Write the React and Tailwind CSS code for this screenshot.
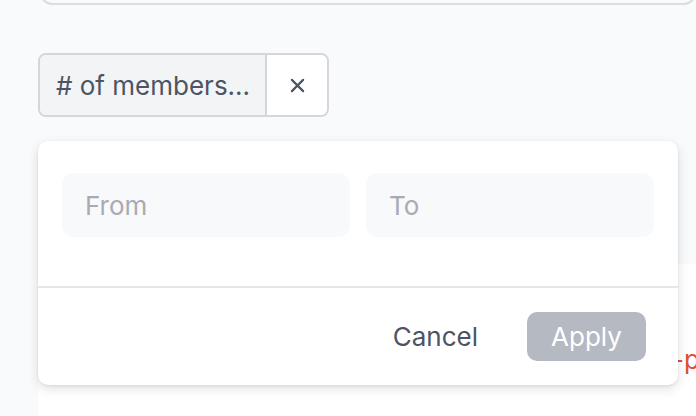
import React from "react";

export default function App() {
  return (
    <div
      className="relative w-[696px] h-[416px] overflow-hidden bg-[#f9fafb]"
      style={{ fontFamily: "Inter, 'Noto Sans', sans-serif" }}
    >
      {/* top box (mostly scrolled off) */}
      <div className="ml-[40px] mt-[-60px] h-[65px] rounded-xl border-2 border-[#dcdde1] bg-[#f9fafb]" />

      {/* chip row */}
      <div className="ml-[38px] mt-[48px] flex h-[64px] w-[291px] overflow-hidden rounded-lg border-2 border-[#d4d6da]">
        <div className="flex w-[227px] items-center border-r-2 border-[#d4d6da] bg-[#f3f4f6] pl-[16px] text-[26px] text-[#4b5563] whitespace-nowrap">
          # of members...
        </div>
        <div className="flex flex-1 items-center justify-center bg-white">
          <svg width="15" height="15" viewBox="0 0 16 16" fill="none">
            <path d="M2 2L14 14M14 2L2 14" stroke="#4b5563" strokeWidth="2.3" strokeLinecap="round" />
          </svg>
        </div>
      </div>

      {/* white card behind */}
      <div className="ml-[38px] mt-[147px] h-[200px] bg-white">
        <div className="pl-[634px] pt-[80px] text-[26px] leading-[32px] text-[#dc5230] whitespace-nowrap">
          -plan
        </div>
      </div>

      {/* popover */}
      <div className="absolute left-[38px] top-[141px] flex h-[244px] w-[640px] flex-col rounded-[10px] bg-white shadow-[0_4px_12px_rgba(0,0,0,0.12),0_1px_3px_rgba(0,0,0,0.08)]">
        <div className="flex h-[145px] gap-[16px] px-[24px] pt-[32px]">
          <div className="flex h-[64px] flex-1 items-center rounded-xl bg-[#f8f9fa] pl-[23px] text-[26px] text-[#a8abb3]">
            From
          </div>
          <div className="flex h-[64px] flex-1 items-center rounded-xl bg-[#f8f9fa] pl-[23px] text-[26px] text-[#a8abb3]">
            To
          </div>
        </div>
        <div className="flex flex-1 items-center justify-end gap-[49px] border-t-2 border-[#e5e6ea] pr-[32px]">
          <span className="text-[26px] text-[#4b5563]">Cancel</span>
          <div className="flex h-[49px] w-[119px] items-center justify-center rounded-[10px] bg-[#b5b9c2] text-[26px] text-white">
            Apply
          </div>
        </div>
      </div>
    </div>
  );
}
